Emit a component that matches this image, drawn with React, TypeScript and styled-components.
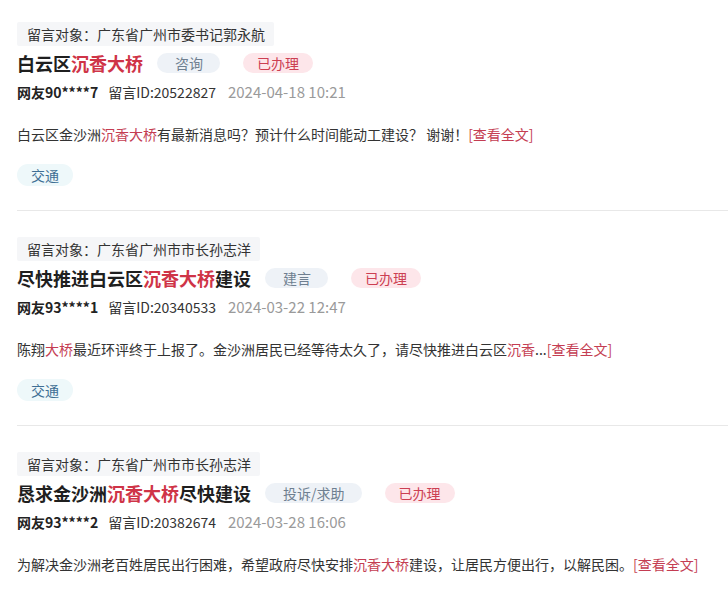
import React from "react";
import styled, { createGlobalStyle } from "styled-components";

const GlobalStyle = createGlobalStyle`
  html, body {
    margin: 0;
    padding: 0;
    background: #ffffff;
  }
  body {
    font-family: "Noto Sans CJK SC", "Noto Sans", sans-serif;
    color: #333333;
  }
`;

const List = styled.div`
  display: flex;
  flex-direction: column;
  padding: 22px 0 0 17px;
`;

const Item = styled.div`
  display: flex;
  flex-direction: column;
  align-items: flex-start;
  padding-bottom: 24px;
  margin-bottom: 26px;
  border-bottom: 1px solid #e8e8e8;
`;

const Target = styled.div`
  height: 24px;
  line-height: 24px;
  padding: 0 9px 0 10px;
  background: #f5f6f8;
  border-radius: 2px;
  font-size: 14px;
  color: #333333;
`;

const TitleRow = styled.div`
  display: flex;
  align-items: center;
  height: 28px;
  margin-top: 3px;
`;

const Title = styled.div`
  font-size: 18px;
  font-weight: 700;
  color: #1f1f1f;
  margin-right: 14px;
`;

const Hl = styled.span<{ $strong?: boolean }>`
  color: ${(p) => (p.$strong ? "#cf3447" : "#c43d52")};
`;

const Pill = styled.span<{ $kind: "type" | "status" }>`
  height: 20px;
  line-height: 20px;
  border-radius: 10px;
  font-size: 14px;
  padding: ${(p) => (p.$kind === "type" ? "0 17px 0 18px" : "0 14px")};
  background: ${(p) => (p.$kind === "type" ? "#eef2f7" : "#fde6ea")};
  color: ${(p) => (p.$kind === "type" ? "#6f7f90" : "#cc3f52")};
  margin-right: ${(p) => (p.$kind === "type" ? "23px" : "0")};
`;

const Meta = styled.div`
  display: flex;
  align-items: center;
  height: 20px;
  line-height: 20px;
  margin-top: 5px;
  font-size: 14px;
`;

const User = styled.span`
  font-weight: 700;
  color: #222222;
  margin-right: 10px;
`;

const MsgId = styled.span`
  color: #333333;
  margin-right: 12px;
`;

const Time = styled.span`
  color: #9a9a9a;
  font-size: 15px;
`;

const Content = styled.div`
  margin-top: 21px;
  height: 22px;
  line-height: 22px;
  font-size: 14px;
  color: #333333;
  white-space: nowrap;
`;

const More = styled.a`
  color: #c43d52;
  text-decoration: none;
  cursor: pointer;
`;

const Topic = styled.span`
  margin-top: 19px;
  height: 22px;
  line-height: 22px;
  padding: 0 14px;
  border-radius: 11px;
  background: #eef8fa;
  color: #3f6f95;
  font-size: 14px;
`;

type Post = {
  target: string;
  title: React.ReactNode;
  type: string;
  status: string;
  user: string;
  id: string;
  time: string;
  content: React.ReactNode;
  topic?: string;
};

const posts: Post[] = [
  {
    target: "留言对象：广东省广州市委书记郭永航",
    title: (
      <>
        白云区<Hl $strong>沉香大桥</Hl>
      </>
    ),
    type: "咨询",
    status: "已办理",
    user: "网友90****7",
    id: "留言ID:20522827",
    time: "2024-04-18 10:21",
    content: (
      <>
        白云区金沙洲<Hl>沉香大桥</Hl>有最新消息吗？预计什么时间能动工建设？ 谢谢！
        <More>[查看全文]</More>
      </>
    ),
    topic: "交通",
  },
  {
    target: "留言对象：广东省广州市市长孙志洋",
    title: (
      <>
        尽快推进白云区<Hl $strong>沉香大桥</Hl>建设
      </>
    ),
    type: "建言",
    status: "已办理",
    user: "网友93****1",
    id: "留言ID:20340533",
    time: "2024-03-22 12:47",
    content: (
      <>
        陈翔<Hl>大桥</Hl>最近环评终于上报了。金沙洲居民已经等待太久了，请尽快推进白云区<Hl>沉香</Hl>...
        <More>[查看全文]</More>
      </>
    ),
    topic: "交通",
  },
  {
    target: "留言对象：广东省广州市市长孙志洋",
    title: (
      <>
        恳求金沙洲<Hl $strong>沉香大桥</Hl>尽快建设
      </>
    ),
    type: "投诉/求助",
    status: "已办理",
    user: "网友93****2",
    id: "留言ID:20382674",
    time: "2024-03-28 16:06",
    content: (
      <>
        为解决金沙洲老百姓居民出行困难，希望政府尽快安排<Hl>沉香大桥</Hl>建设，让居民方便出行，以解民困。
        <More>[查看全文]</More>
      </>
    ),
    topic: "交通",
  },
];

export default function App() {
  return (
    <>
      <GlobalStyle />
      <List>
        {posts.map((p, i) => (
          <Item key={i}>
            <Target>{p.target}</Target>
            <TitleRow>
              <Title>{p.title}</Title>
              <Pill $kind="type">{p.type}</Pill>
              <Pill $kind="status">{p.status}</Pill>
            </TitleRow>
            <Meta>
              <User>{p.user}</User>
              <MsgId>{p.id}</MsgId>
              <Time>{p.time}</Time>
            </Meta>
            <Content>{p.content}</Content>
            {p.topic && <Topic>{p.topic}</Topic>}
          </Item>
        ))}
      </List>
    </>
  );
}
